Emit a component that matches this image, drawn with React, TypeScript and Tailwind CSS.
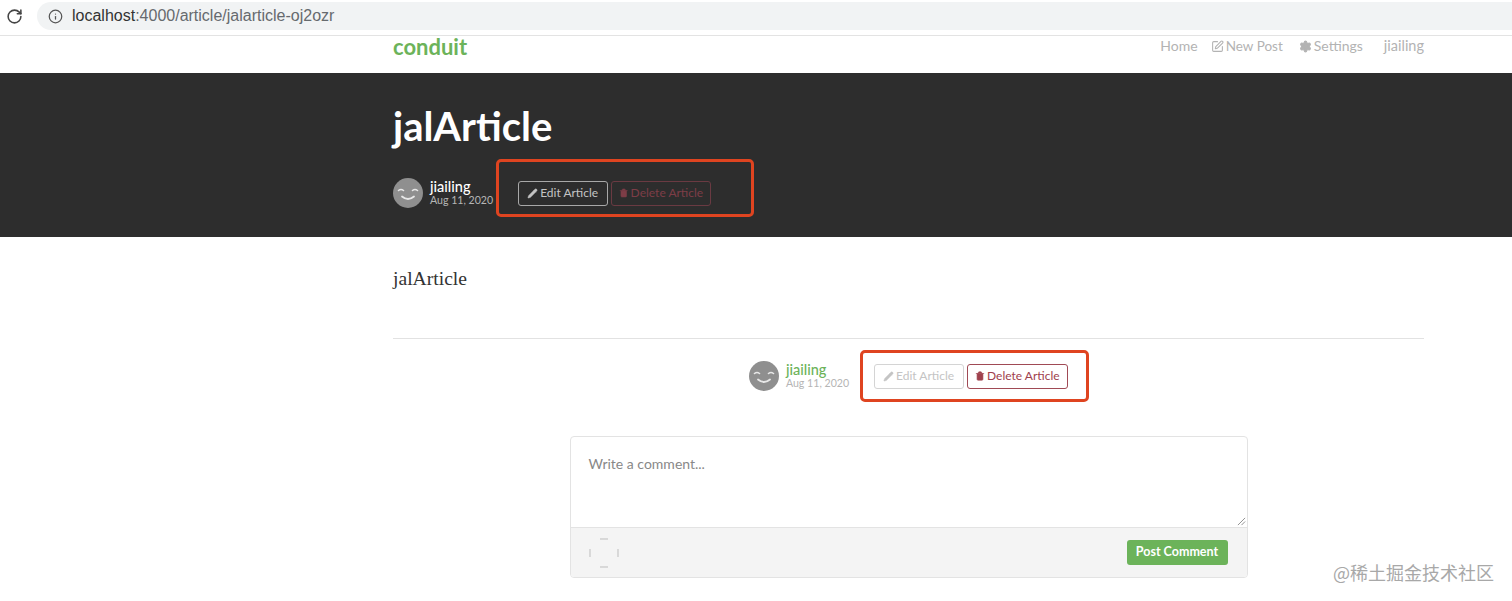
import { Info, RotateCw, Pencil, Trash2, Settings, SquarePen } from "lucide-react";

const ui = "font-['Lato','Open_Sans',sans-serif]";

function Smiley({ className }: { className: string }) {
  return (
    <svg viewBox="0 0 30 30" className={className}>
      <circle cx="15" cy="15" r="15" fill="#8f8f8f" />
      <path d="M5.5 12.5 Q8 10.5 10.5 12.5 M19.5 12.5 Q22 10.5 24.5 12.5" stroke="#e8e8e8" strokeWidth="1.6" fill="none" strokeLinecap="round" />
      <path d="M9 18.5 Q15 23.5 21 18.5" stroke="#e8e8e8" strokeWidth="1.8" fill="none" strokeLinecap="round" />
    </svg>
  );
}

function ArticleMeta({ dark }: { dark?: boolean }) {
  return (
    <div className="flex items-center">
      <Smiley className="h-[30px] w-[30px] shrink-0" />
      <div className="ml-[7px] flex flex-col">
        <span className={`text-[14.5px] leading-[15px] font-medium ${dark ? "text-white" : "text-[#6cb35a]"}`}>jiailing</span>
        <span className="text-[10.6px] leading-[13px] text-[#b5b5b5]">Aug 11, 2020</span>
      </div>
      <div className="ml-[25px] flex items-center gap-[3px]">
        <button
          className={`flex h-[25px] w-[90px] items-center gap-[2px] rounded-[3px] border px-[8px] text-[12px] whitespace-nowrap ${
            dark ? "border-[#a8a8a8] text-[#c4c4c4]" : "border-[#d4d4d4] text-[#c4c4c4]"
          }`}
        >
          <Pencil size={11} fill="currentColor" strokeWidth={1} />
          Edit Article
        </button>
        <button
          className={`flex h-[25px] items-center gap-[2px] rounded-[3px] border px-[7px] text-[12px] whitespace-nowrap ${
            dark ? "w-[100px] border-[#6a3a42] text-[#7d3d47]" : "w-[101px] border-[#a04a55] text-[#9f414d]"
          }`}
        >
          <Trash2 size={10} fill="currentColor" strokeWidth={1.5} />
          Delete Article
        </button>
      </div>
    </div>
  );
}

export default function App() {
  return (
    <div className={`relative h-[601px] overflow-hidden bg-white ${ui}`}>
      <div className="flex h-[36px] items-center border-b border-[#e3e3e3] bg-white pb-[3px]">
        <RotateCw size={17} strokeWidth={2.2} className="ml-[6px] text-[#444]" />
        <div className="ml-[14px] flex h-[28px] flex-1 items-center rounded-l-full bg-[#f1f3f4] pl-[11px] font-['Liberation_Sans',sans-serif] text-[16px] text-[#666a6e]">
          <Info size={15} className="text-[#555]" />
          <span className="ml-[9px]">
            <span className="text-[#333]">localhost</span>:4000/article/jalarticle-oj2ozr
          </span>
        </div>
      </div>

      <nav className="ml-[393px] flex h-[37px] w-[1031px] items-center justify-between pb-[17px]">
        <span className="text-[22px] font-bold text-[#6cb35a]">conduit</span>
        <div className="flex items-center text-[14px] leading-[20px] text-[#b3b3b3]">
          <span>Home</span>
          <span className="ml-[13px] flex items-center gap-[2px] text-[13.5px]"><SquarePen size={13} />New Post</span>
          <span className="ml-[16px] flex items-center gap-[2px]"><Settings size={13} fill="currentColor" />Settings</span>
          <span className="ml-[21px] text-[14.5px]">jiailing</span>
        </div>
      </nav>

      <section className="h-[164px] bg-[#2d2d2d]">
        <div className="ml-[393px] w-[1031px] pt-[27px]">
          <h1 className="text-[40px] leading-[52px] font-bold text-white">jalArticle</h1>
          <div className="mt-[26px]">
            <ArticleMeta dark />
          </div>
        </div>
      </section>

      <main className="ml-[393px] w-[1031px]">
        <p className="mt-[31px] font-['Liberation_Serif',serif] text-[19.6px] leading-[22px] text-[#333]">jalArticle</p>
        <hr className="mt-[48px] border-[#e2e2e2]" />
        <div className="mt-[22px] flex justify-center">
          <ArticleMeta />
        </div>

        <div className="mx-auto mt-[45px] w-[678px] overflow-hidden rounded-[4px] border border-[#e3e3e3]">
          <div className="relative h-[90px] px-[18px] pt-[16px] text-[14px] text-[#888]">
            Write a comment...
            <svg viewBox="0 0 10 10" className="absolute right-[1px] bottom-[1px] h-[9px] w-[9px]">
              <path d="M1 9 L9 1 M5 9 L9 5" stroke="#888" strokeWidth="1" />
            </svg>
          </div>
          <div className="flex h-[50px] items-center justify-between border-t border-[#e3e3e3] bg-[#f4f4f4] pl-[18px] pr-[19px]">
            <svg viewBox="0 0 30 30" className="h-[30px] w-[30px]">
              <path d="M11 1 H19 M11 29 H19 M1 11 V19 M29 11 V19" stroke="#bdbdbd" strokeWidth="1" />
            </svg>
            <button className="h-[25px] w-[101px] rounded-[3px] bg-[#6cb35a] text-[12.5px] font-bold text-white">Post Comment</button>
          </div>
        </div>
      </main>

      <div className="absolute top-[159px] left-[496px] h-[58px] w-[258px] rounded-[5px] border-[3px] border-[#df4420]" />
      <div className="absolute top-[350px] left-[860px] h-[52px] w-[229px] rounded-[5px] border-[3px] border-[#df4420]" />
      <span className="absolute top-[561px] left-[1333px] font-['Noto_Sans_CJK_SC',sans-serif] text-[18px] leading-[22px] text-[#a8a8a8]">@稀土掘金技术社区</span>
    </div>
  );
}
